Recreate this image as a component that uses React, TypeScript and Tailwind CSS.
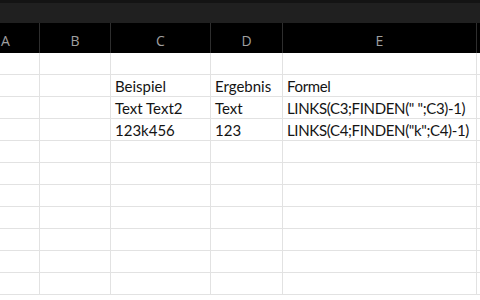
const cols = ['A', 'B', 'C', 'D', 'E', '']

const rows: string[][] = [
  ['', '', '', '', '', ''],
  ['', '', 'Beispiel', 'Ergebnis', 'Formel', ''],
  ['', '', 'Text Text2', 'Text', 'LINKS(C3;FINDEN(" ";C3)-1)', ''],
  ['', '', '123k456', '123', 'LINKS(C4;FINDEN("k";C4)-1)', ''],
  ['', '', '', '', '', ''],
  ['', '', '', '', '', ''],
  ['', '', '', '', '', ''],
  ['', '', '', '', '', ''],
  ['', '', '', '', '', ''],
  ['', '', '', '', '', ''],
  ['', '', '', '', '', ''],
]

const grid = 'grid grid-cols-[68px_71px_100px_72px_194px_60px]'

export default function App() {
  return (
    <div className="w-[480px] h-[300px] overflow-hidden bg-white">
      {/* Ribbon-Rest */}
      <div className="h-[23px] bg-[#202020] border-t-[3px] border-[#141414]" />

      {/* Spaltenköpfe */}
      <div className={`${grid} -ml-[28px] h-[30px] bg-black`}>
        {cols.map((c, i) => (
          <div
            key={i}
            className="flex items-center justify-center pt-[4px] border-r border-[#2e2e2e] text-[14px] text-[#a0a0a0] font-['Open_Sans',sans-serif]"
          >
            {c}
          </div>
        ))}
      </div>

      {/* Zellen */}
      {rows.map((r, i) => (
        <div key={i} className={`${grid} -ml-[28px] h-[22px] border-b border-[#e2e2e2]`}>
          {r.map((v, j) => (
            <div
              key={j}
              className={`flex items-center pl-[4px] border-r border-[#e2e2e2] text-[15px] text-[#141414] whitespace-nowrap font-['Lato',sans-serif] ${
                j === 4 ? 'tracking-[-0.35px]' : ''
              }`}
            >
              {v}
            </div>
          ))}
        </div>
      ))}
    </div>
  )
}
